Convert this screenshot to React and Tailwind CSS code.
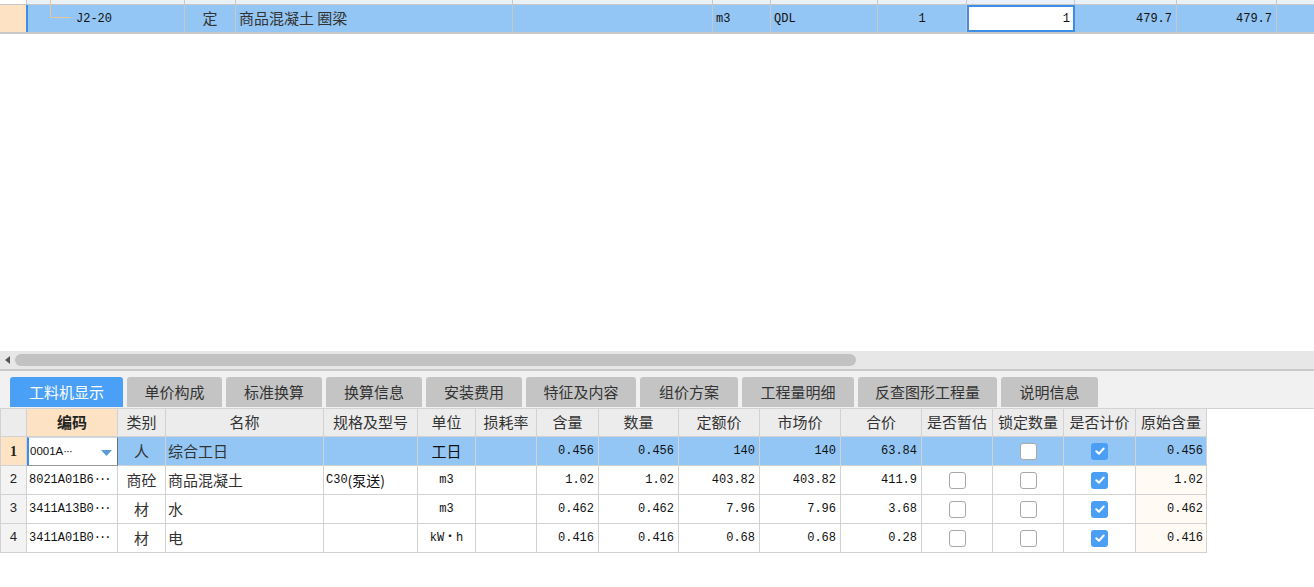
import React from "react";

const CJK = "font-['Noto_Sans_CJK_SC',sans-serif]";
const MONO = "font-['Liberation_Mono','Noto_Sans_CJK_SC',monospace]";

function Check({ checked }) {
  if (checked)
    return (
      <span className="flex h-[17px] w-[17px] items-center justify-center rounded-[3px] bg-[#4a9ff5]">
        <svg width="12" height="12" viewBox="0 0 12 12">
          <path d="M2.3 6.3 L4.9 8.7 L9.7 3.5" fill="none" stroke="white" strokeWidth="2" strokeLinecap="round" strokeLinejoin="round" />
        </svg>
      </span>
    );
  return <span className="block h-[17px] w-[17px] rounded-[3px] border border-[#a9a9a9] bg-white" />;
}

const TOPCOLS = "grid-cols-[26px_159px_51px_277px_200px_58px_107px_89px_108px_102px_100px_1fr]";
const TBLCOLS = "grid-cols-[26px_91px_48px_158px_94px_58px_61px_62px_80px_81px_81px_81px_71px_71px_72px_71px]";

const tabs = [
  ["工料机显示", "w-[113px]", true],
  ["单价构成", "w-[95px]"],
  ["标准换算", "w-[96px]"],
  ["换算信息", "w-[96px]"],
  ["安装费用", "w-[96px]"],
  ["特征及内容", "w-[110px]"],
  ["组价方案", "w-[98px]"],
  ["工程量明细", "w-[112px]"],
  ["反查图形工程量", "w-[139px]"],
  ["说明信息", "w-[97px]"],
];

const headers = ["", "编码", "类别", "名称", "规格及型号", "单位", "损耗率", "含量", "数量", "定额价", "市场价", "合价", "是否暂估", "锁定数量", "是否计价", "原始含量"];

const rows = [
  { n: "1", code: "0001A", cat: "人", name: "综合工日", spec: "", unit: "工日", qty: "0.456", num: "0.456", dp: "140", mp: "140", total: "63.84", est: null, lock: false, price: true, orig: "0.456" },
  { n: "2", code: "8021A01B6", cat: "商砼", name: "商品混凝土", spec: "C30(泵送)", unit: "m3", qty: "1.02", num: "1.02", dp: "403.82", mp: "403.82", total: "411.9", est: false, lock: false, price: true, orig: "1.02" },
  { n: "3", code: "3411A13B0", cat: "材", name: "水", spec: "", unit: "m3", qty: "0.462", num: "0.462", dp: "7.96", mp: "7.96", total: "3.68", est: false, lock: false, price: true, orig: "0.462" },
  { n: "4", code: "3411A01B0", cat: "材", name: "电", spec: "", unit: "kW・h", qty: "0.416", num: "0.416", dp: "0.68", mp: "0.68", total: "0.28", est: false, lock: false, price: true, orig: "0.416" },
];

const cell = "border-r border-b border-[#d2d2d2] flex items-center overflow-hidden whitespace-nowrap";

function TableRow({ r, first }) {
  const bg = first ? "bg-[#93c6f4]" : "bg-white";
  const num = `${cell} ${bg} justify-end pr-[4px] ${MONO} text-[12px] text-[#111]`;
  const cen = `${cell} ${bg} justify-center`;
  return (
    <>
      <div className={`${cell} justify-center ${first ? "bg-[#fde3c3] font-bold font-['Liberation_Serif',serif] text-[14px]" : `bg-[#f3f3f3] ${MONO} text-[13px]`} text-[#222]`}>{r.n}</div>
      {first ? (
        <div className="relative flex items-center border-b border-l-2 border-r border-t border-b-[#9a9a9a] border-l-[#3d8ee8] border-r-[#6f6f6f] border-t-[#cfd8e3] bg-white pl-[1px] font-['Liberation_Sans',sans-serif] text-[11.5px] text-[#111]">
          <span>0001A</span>
          <span className="tracking-[-1px]">···</span>
          <svg className="absolute left-[72px] top-[12px]" width="11" height="6" viewBox="0 0 11 6">
            <path d="M0 0 L11 0 L5.5 6 Z" fill="#5b9bd5" />
          </svg>
        </div>
      ) : (
        <div className={`${cell} ${bg} pl-[2px] ${MONO} text-[12px] text-[#111]`}>
          <span>{r.code}</span>
          <span className="tracking-[-2px]">···</span>
        </div>
      )}
      <div className={`${cen} ${CJK} text-[15px] text-[#333]`}>{r.cat}</div>
      <div className={`${cell} ${bg} pl-[2px] ${CJK} text-[15px] text-[#333]`}>{r.name}</div>
      <div className={`${cell} ${bg} pl-[2px] ${MONO} text-[12px] text-[#111]`}>
        {r.spec && (
          <>
            <span>C30</span>
            <span className={`${CJK} text-[14px]`}>(泵送)</span>
          </>
        )}
      </div>
      <div className={`${cen} ${r.unit === "工日" ? `${CJK} text-[15px]` : `${MONO} text-[12px]`} text-[#111]`}>{r.unit}</div>
      <div className={`${cell} ${bg}`} />
      <div className={num}>{r.qty}</div>
      <div className={num}>{r.num}</div>
      <div className={num}>{r.dp}</div>
      <div className={num}>{r.mp}</div>
      <div className={num}>{r.total}</div>
      <div className={cen}>{r.est !== null && <Check checked={r.est} />}</div>
      <div className={cen}><Check checked={r.lock} /></div>
      <div className={cen}><Check checked={r.price} /></div>
      <div className={`${cell} ${first ? "bg-[#93c6f4]" : "bg-[#fffaf3]"} justify-end pr-[3px] ${MONO} text-[12px] text-[#111]`}>{r.orig}</div>
    </>
  );
}

export default function App() {
  const tc = "border-r border-[#c8c8c8]";
  return (
    <div className={`flex h-[587px] w-[1314px] flex-col overflow-hidden bg-white ${CJK}`}>
      {/* top grid */}
      <div className="h-[351px] bg-white">
        <div className={`grid h-[5px] ${TOPCOLS} border-b border-[#c8c8c8]`}>
          <div className="bg-white" />
          <div className={`relative bg-[#eaf1fa] ${tc} border-l border-l-[#c8c8c8]`}>
            <span className="absolute left-[23px] top-0 h-[5px] w-[1px] bg-[#e6c79a]" />
          </div>
          {Array.from({ length: 9 }).map((_, i) => (
            <div key={i} className={`bg-[#eaf1fa] ${tc}`} />
          ))}
          <div className="bg-[#eaf1fa]" />
        </div>
        <div className={`grid h-[29px] ${TOPCOLS} border-b-2 border-[#c8c8c8] bg-[#93c6f4] text-[#111]`}>
          <div className="bg-[#fde3c3]" />
          <div className={`relative flex items-center border-l-2 border-l-[#3d8ee8] ${tc} pl-[48px] ${MONO} text-[12px]`}>
            <span className="absolute left-[22px] top-0 h-[12px] w-[1px] bg-[#e6c79a]" />
            <span className="absolute left-[22px] top-[12px] h-[1px] w-[21px] bg-[#e6c79a]" />
            J2-20
          </div>
          <div className={`flex items-center justify-center ${tc} text-[15px] text-[#333]`}>定</div>
          <div className={`flex items-center ${tc} pl-[3px] text-[15px] text-[#333]`}>商品混凝土 圈梁</div>
          <div className={tc} />
          <div className={`flex items-center ${tc} pl-[3px] ${MONO} text-[12px]`}>m3</div>
          <div className={`flex items-center ${tc} pl-[3px] ${MONO} text-[12px]`}>QDL</div>
          <div className={`flex items-center justify-center ${tc} ${MONO} text-[12px]`}>1</div>
          <div className={`flex items-center justify-end border-2 border-[#3d8ee8] bg-white pr-[3px] ${MONO} text-[12px]`}>1</div>
          <div className={`flex items-center justify-end ${tc} pr-[4px] ${MONO} text-[12px]`}>479.7</div>
          <div className={`flex items-center justify-end ${tc} pr-[4px] ${MONO} text-[12px]`}>479.7</div>
          <div />
        </div>
      </div>

      {/* horizontal scrollbar */}
      <div className="flex h-[18px] items-center bg-[#e7e7e7]">
        <svg className="ml-[5px]" width="5" height="8" viewBox="0 0 5 8">
          <path d="M5 0 L0 4 L5 8 Z" fill="#555" />
        </svg>
        <div className="ml-[5px] h-[12px] w-[841px] rounded-full bg-[#c2c2c2]" />
      </div>
      <div className="h-[2px] bg-[#c9c9c9]" />

      {/* tabs */}
      <div className="flex h-[37px] items-start gap-1 bg-[#f1f1f1] pl-[10px] pt-[6px]">
        {tabs.map(([t, w, active]) => (
          <div
            key={t}
            className={`flex h-[30px] ${w} items-center justify-center rounded-t-[3px] text-[15px] ${active ? "bg-[#4a9ff6] text-white" : "bg-[#c4c4c4] text-[#333]"}`}
          >
            {t}
          </div>
        ))}
      </div>

      {/* table */}
      <div className="border-t border-[#d2d2d2]">
        <div className={`grid w-[1207px] ${TBLCOLS} border-l border-[#d2d2d2]`}>
          {headers.map((h, i) => (
            <div
              key={i}
              className={`flex h-[28px] items-center justify-center overflow-hidden whitespace-nowrap border-b border-r border-[#d2d2d2] text-[15px] ${i === 1 ? "bg-[#fde3c3] font-bold text-[#222]" : "bg-[#ececec] text-[#333]"}`}
            >
              {h}
            </div>
          ))}
        </div>
        <div className={`grid w-[1207px] auto-rows-[29px] ${TBLCOLS} border-l border-[#d2d2d2]`}>
          {rows.map((r, i) => (
            <TableRow key={r.n} r={r} first={i === 0} />
          ))}
        </div>
      </div>
    </div>
  );
}
